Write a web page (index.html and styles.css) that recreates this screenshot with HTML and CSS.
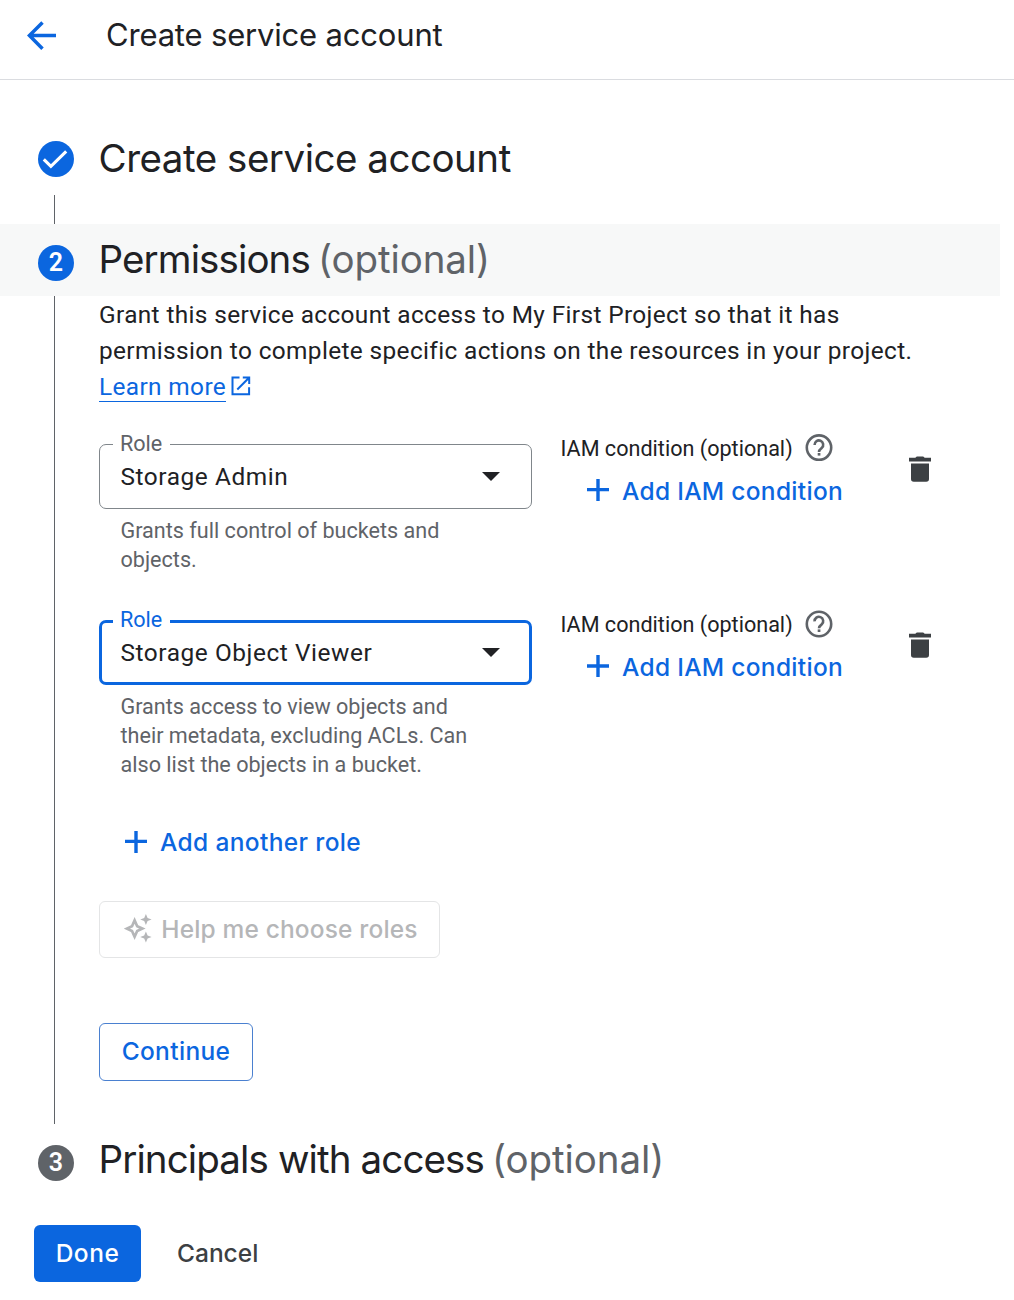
FILE: index.html
```html
<!DOCTYPE html>
<html lang="en">
<head>
<meta charset="utf-8">
<title>Create service account</title>
<link rel="stylesheet" href="styles.css">
</head>
<body>
<header class="topbar">
  <svg class="back" width="30" height="30" viewBox="0 0 30 30"><path d="M29 14.5H3M15.5 1.4L2.4 14.5L15.5 27.8" fill="none" stroke="currentColor" stroke-width="3.5"/></svg>
  <h1 class="topbar-title">Create service account</h1>
</header>
<main>
  <section class="step step-done">
    <span class="badge"><svg width="36" height="36" viewBox="0 0 36 36"><path d="M5.8 18.3L12.9 25.4L28.2 10.4" fill="none" stroke="#fff" stroke-width="3.1"/></svg></span>
    <h2 class="step-title first-title">Create service account</h2>
  </section>
  <div class="connector"></div>
  <section class="step step-active">
    <span class="badge">2</span>
    <h2 class="step-title">Permissions <span class="optional">(optional)</span></h2>
  </section>
  <div class="step-body">
    <p class="intro">Grant this service account access to My First Project so that it has<br>permission to complete specific actions on the resources in your project.<br><a class="learn">Learn more</a><svg class="external" width="20" height="20" viewBox="0 0 20 20"><path d="M8.5 1.6H1.5V18.2H18.1V11.3M11.8 1.6H18.2V8M18 1.8L6.3 13.5" fill="none" stroke="currentColor" stroke-width="2"/></svg></p>

    <div class="role-row">
      <div class="role">
        <div class="select">
          <span class="label">Role</span>
          <span class="value">Storage Admin</span>
          <svg class="arrow" width="18" height="9" viewBox="0 0 18 9"><path d="M0 0H18L9 9Z" fill="#202124"/></svg>
        </div>
        <p class="hint">Grants full control of buckets and<br>objects.</p>
      </div>
      <div class="condition">
        <div class="cond-head"><span class="cond-label">IAM condition (optional)</span>
          <svg width="28" height="28" viewBox="0 0 28 28"><circle cx="14" cy="13.6" r="12.2" fill="none" stroke="#5f6368" stroke-width="2.6"/><path d="M9.6 11A4.3 4.3 0 1 1 16.8 13.9C15 15.3 14 15.9 14 17.9" fill="none" stroke="#5f6368" stroke-width="2.6"/><rect x="12.7" y="19" width="2.7" height="2.6" fill="#5f6368"/></svg>
        </div>
        <div class="text-button add-condition"><svg width="22" height="22" viewBox="0 0 22 22"><path d="M0 10.6H22M11 0V22" stroke="currentColor" stroke-width="3.4"/></svg><span>Add IAM condition</span></div>
      </div>
      <svg class="trash" width="22" height="26" viewBox="0 0 22 26"><path d="M0 1.8H6.3L7.8 0.5H14.2L15.7 1.8H22V5.4H0ZM2 7.4H20V23A2.8 2.8 0 0 1 17.2 25.8H4.8A2.8 2.8 0 0 1 2 23Z" fill="#3c4043"/></svg>
    </div>

    <div class="role-row">
      <div class="role">
        <div class="select focused">
          <span class="label">Role</span>
          <span class="value">Storage Object Viewer</span>
          <svg class="arrow" width="18" height="9" viewBox="0 0 18 9"><path d="M0 0H18L9 9Z" fill="#202124"/></svg>
        </div>
        <p class="hint">Grants access to view objects and<br>their metadata, excluding ACLs. Can<br>also list the objects in a bucket.</p>
      </div>
      <div class="condition">
        <div class="cond-head"><span class="cond-label">IAM condition (optional)</span>
          <svg width="28" height="28" viewBox="0 0 28 28"><circle cx="14" cy="14" r="12.2" fill="none" stroke="#5f6368" stroke-width="2.6"/><path d="M9.6 11.4A4.3 4.3 0 1 1 16.8 14.3C15 15.7 14 16.3 14 18.3" fill="none" stroke="#5f6368" stroke-width="2.6"/><rect x="12.7" y="19.4" width="2.7" height="2.6" fill="#5f6368"/></svg>
        </div>
        <div class="text-button add-condition"><svg width="22" height="22" viewBox="0 0 22 22"><path d="M0 11H22M11 0V22" stroke="currentColor" stroke-width="3.4"/></svg><span>Add IAM condition</span></div>
      </div>
      <svg class="trash" width="22" height="26" viewBox="0 0 22 26"><path d="M0 1.8H6.3L7.8 0.5H14.2L15.7 1.8H22V5.4H0ZM2 7.4H20V23A2.8 2.8 0 0 1 17.2 25.8H4.8A2.8 2.8 0 0 1 2 23Z" fill="#3c4043"/></svg>
    </div>

    <div class="text-button add-role"><svg width="22" height="22" viewBox="0 0 22 22"><path d="M0 10.4H22M11 0V22" stroke="currentColor" stroke-width="3.4"/></svg><span>Add another role</span></div>

    <button class="button help" disabled>
      <svg width="28" height="30" viewBox="0 0 28 30"><path d="M10.6 6.4L13.2 12.2L18.4 14.6L13.2 17L10.6 22.8L8 17L2.8 14.6L8 12.2Z" fill="none" stroke="currentColor" stroke-width="2.7"/><path d="M21.9 0L23.6 3.9L27.6 5.5L23.6 7.1L21.9 11L20.2 7.1L16.2 5.5L20.2 3.9ZM21.9 17.6L23.6 21.4L27.6 23L23.6 24.6L21.9 28.5L20.2 24.6L16.2 23L20.2 21.4Z" fill="currentColor"/></svg>
      <span>Help me choose roles</span>
    </button>
    <button class="button continue">Continue</button>
  </div>
  <section class="step step-next">
    <span class="badge">3</span>
    <h2 class="step-title">Principals with access <span class="optional">(optional)</span></h2>
  </section>
  <footer class="actions">
    <button class="button done">Done</button>
    <button class="button cancel">Cancel</button>
  </footer>
</main>
</body>
</html>
```

FILE: styles.css
```css
* { box-sizing: border-box; }
body {
  margin: 0;
  background: #fff;
  color: #202124;
  font-family: Roboto, sans-serif;
  font-size: 24.4px;
  white-space: nowrap;
}
h1, h2, p { margin: 0; font-weight: 400; }
svg { display: block; flex: none; }

.topbar {
  display: flex;
  align-items: center;
  height: 80px;
  padding: 0 0 8px 27px;
  border-bottom: 1px solid #dadce0;
}
.back { color: #0b66df; }
.topbar-title {
  margin-left: 49px;
  padding-bottom: 2px;
  font: 400 31px/40px Inter, sans-serif;
  letter-spacing: -0.18px;
}

.step { display: flex; align-items: center; height: 72px; padding-left: 38px; }
.step-done { margin-top: 43px; }
.step-active { width: 1000px; background: #f7f8f8; }
.badge {
  display: flex;
  align-items: center;
  justify-content: center;
  width: 36px;
  height: 36px;
  border-radius: 50%;
  background: #0b66df;
  color: #fff;
  font: 600 25px/36px Roboto, sans-serif;
}
.step-active .badge, .step-next .badge { margin-top: 6px; }
.step-next .badge { background: #5f6368; }
.step-title {
  margin-left: 24.5px;
  padding-bottom: 2px;
  font: 400 38.5px/48px Inter, sans-serif;
  letter-spacing: -0.88px;
}
.first-title { letter-spacing: -0.48px; }
.optional { margin-left: -2px; color: #5f6368; letter-spacing: -0.08px; }
.connector { width: 1px; height: 29px; margin-left: 54px; background: #5f6368; }

.step-body {
  height: 828px;
  margin-left: 54px;
  padding: 1px 0 0 44px;
  border-left: 1px solid #5f6368;
}
.intro { line-height: 36px; letter-spacing: 0.37px; }
.learn { color: #0b66df; border-bottom: 1px solid #0b66df; }
.external { display: inline-block; margin-left: 5px; color: #0b66df; vertical-align: -1px; }

.role-row { display: flex; align-items: flex-start; margin-top: 39px; }
.role-row + .role-row { margin-top: 46px; }
.role { width: 433px; }
.select {
  position: relative;
  display: flex;
  align-items: center;
  justify-content: space-between;
  height: 65px;
  padding: 0 31px 1px 20.5px;
  border: 1px solid #80868b;
  border-radius: 7px;
}
.select.focused { border: 3px solid #0b66df; padding: 0 29px 1px 18.5px; }
.label {
  position: absolute;
  top: -14px;
  left: 13px;
  padding: 0 8px 0 7px;
  background: #fff;
  color: #5f6368;
  font-size: 21.6px;
  line-height: 26px;
}
.focused .label { top: -16px; left: 11px; color: #0b66df; }
.value { letter-spacing: 0.57px; }
.hint {
  margin-top: 7px;
  padding-left: 21.5px;
  color: #5f6368;
  font-size: 21.6px;
  line-height: 29px;
}
.condition { width: 348px; padding-left: 28.5px; }
.cond-head {
  display: flex;
  align-items: center;
  gap: 12px;
  height: 28px;
  margin-top: -10px;
  font-size: 21.6px;
}
.text-button {
  display: flex;
  align-items: center;
  gap: 13px;
  height: 36px;
  color: #0b66df;
  font: 500 24.5px/36px Inter, sans-serif;
  letter-spacing: 0.36px;
}
.add-condition { margin: 10px 0 0 26.5px; letter-spacing: 0.3px; }
.add-condition span { padding-top: 2px; }
.trash { margin: 12px 0 0 29px; }
.add-role { margin: 45px 0 0 26px; }

.button {
  display: flex;
  align-items: center;
  justify-content: center;
  height: 57px;
  padding: 0 0 2px;
  border: 0;
  border-radius: 6px;
  background: none;
  font: 500 24.5px/36px Inter, sans-serif;
}
.help {
  gap: 9px;
  width: 341px;
  margin-top: 41px;
  padding-left: 3px;
  border: 1px solid #e4e5e6;
  color: #b5b6b8;
  letter-spacing: 0.15px;
}
.continue {
  width: 154px;
  height: 58px;
  margin-top: 65px;
  border: 1px solid #4a80d0;
  color: #0b66df;
  letter-spacing: 0.35px;
}
.actions { display: flex; margin: 29px 0 0 34px; }
.done { width: 107px; background: #0b66df; color: #fff; letter-spacing: 0.5px; }
.cancel { margin-left: 36px; color: #3c4043; }
```
